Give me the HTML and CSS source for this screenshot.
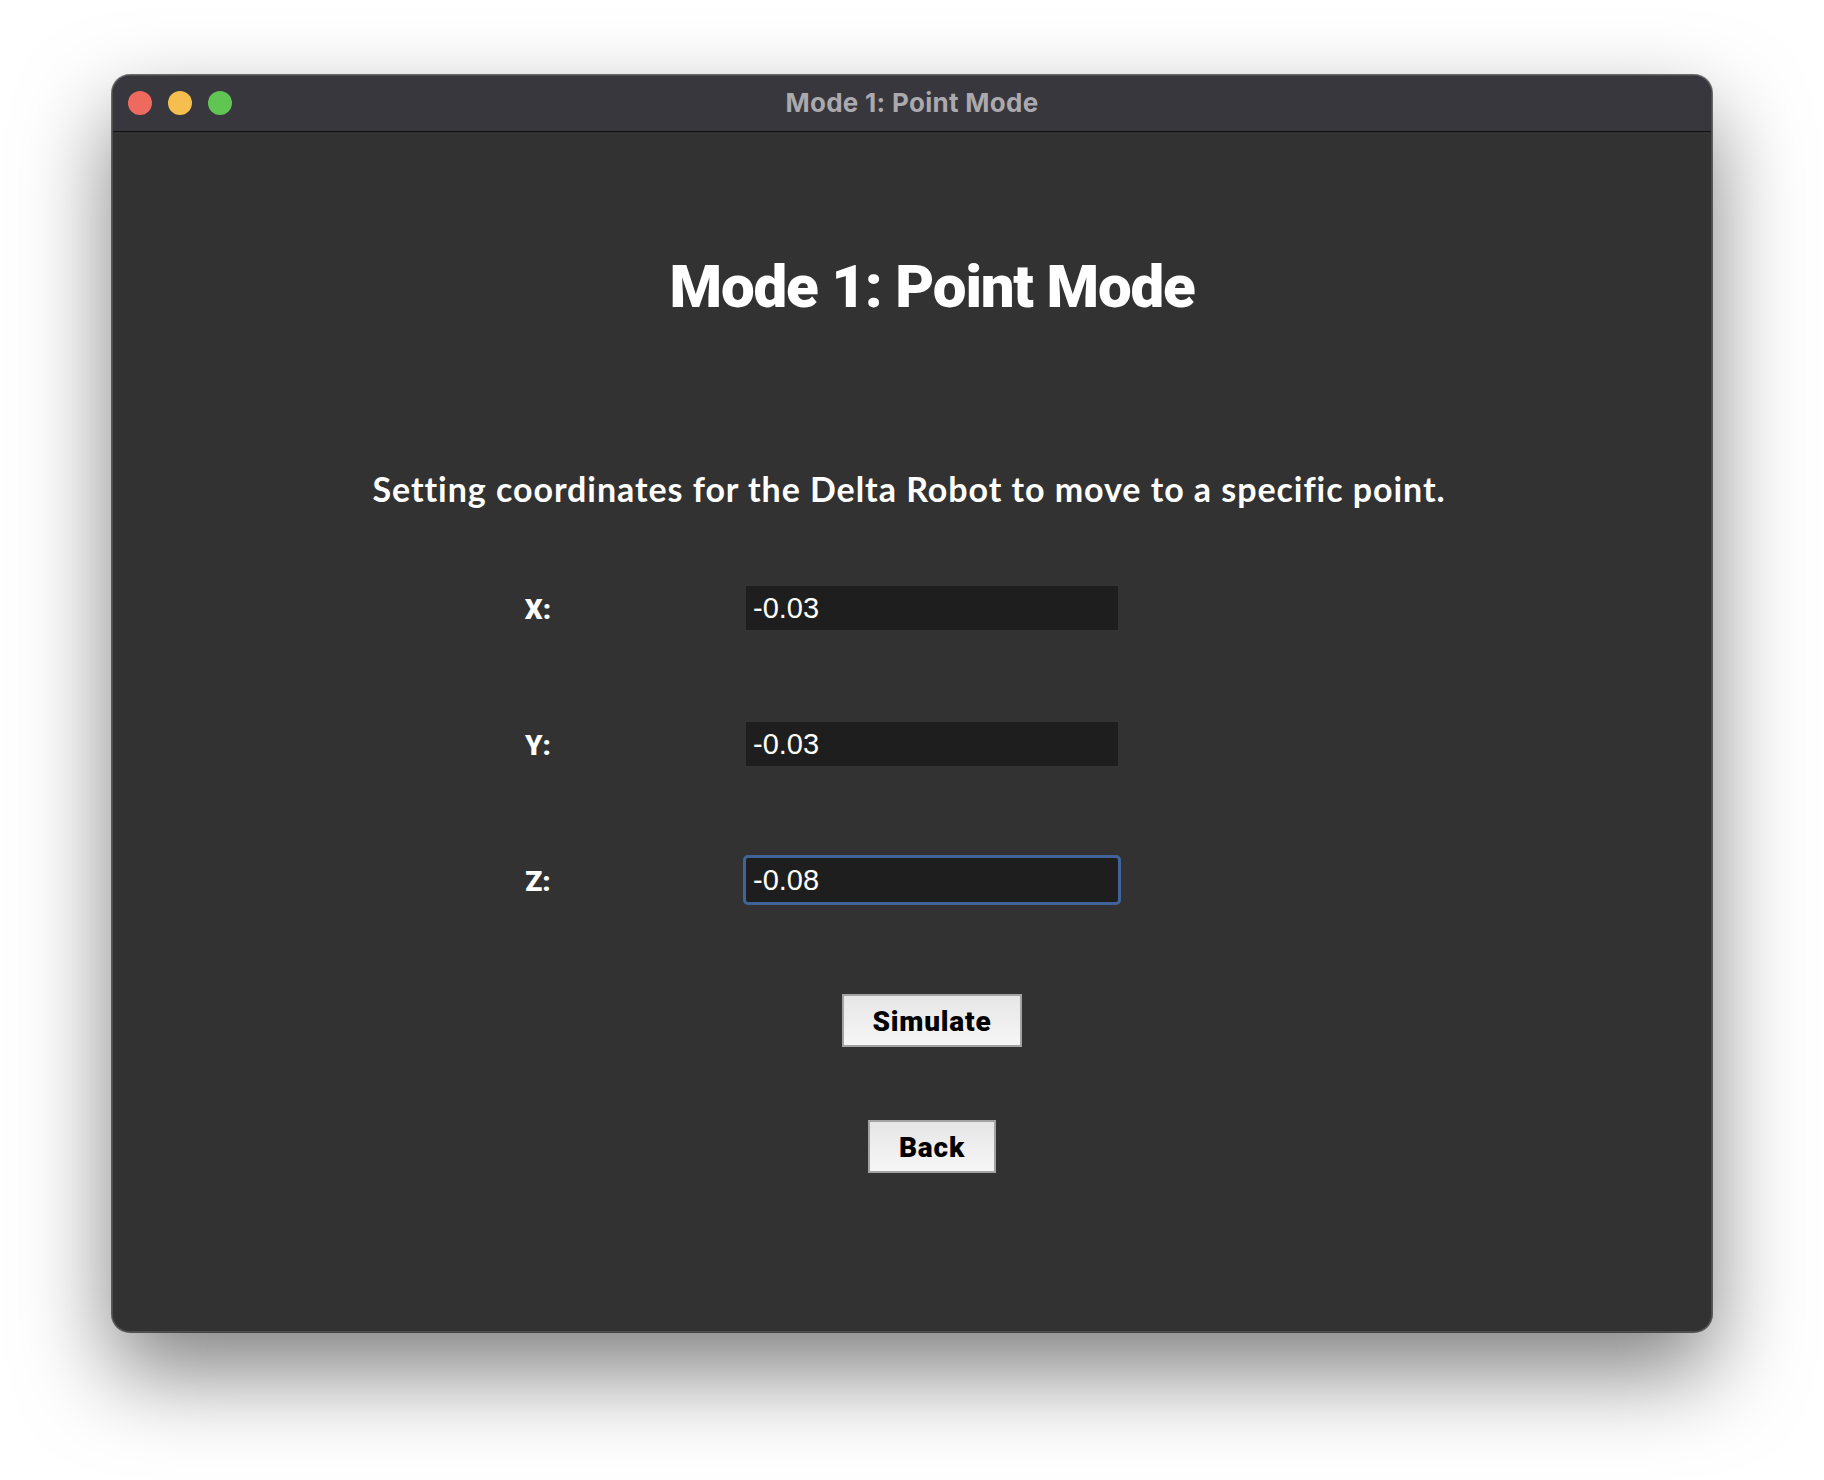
FILE: index.html
```
<!DOCTYPE html>
<html lang="en">
<head>
<meta charset="utf-8">
<title>Mode 1: Point Mode</title>
<link rel="stylesheet" href="styles.css">
</head>
<body>
<div class="window">
  <div class="titlebar">
    <div class="lights">
      <span class="light light-red"></span>
      <span class="light light-yellow"></span>
      <span class="light light-green"></span>
    </div>
    <div class="title">Mode 1: Point Mode</div>
  </div>
  <div class="content">
    <h1 class="heading">Mode 1: Point Mode</h1>
    <p class="subtitle">Setting coordinates for the Delta Robot to move to a specific point.</p>
    <div class="form">
      <label class="label">X:</label>
      <div class="entry">-0.03</div>
      <label class="label">Y:</label>
      <div class="entry">-0.03</div>
      <label class="label">Z:</label>
      <div class="entry entry-focus">-0.08</div>
    </div>
    <button class="btn btn-simulate">Simulate</button>
    <button class="btn btn-back">Back</button>
  </div>
</div>
</body>
</html>
```
FILE: styles.css
```
html, body {
  margin: 0;
  padding: 0;
  background: #ffffff;
}
body {
  padding: 75px 112px 0 112px;
  width: 1600px;
  height: 1405px;
  overflow: hidden;
}
.window {
  width: 1600px;
  height: 1257px;
  box-sizing: border-box;
  border: 1px solid #4e4e4e;
  border-radius: 18px;
  overflow: hidden;
  display: flex;
  flex-direction: column;
  background: #323232;
  box-shadow: 0 0 0 1px rgba(0,0,0,0.55), 0 40px 90px rgba(0,0,0,0.5);
}
.titlebar {
  height: 56px;
  box-sizing: border-box;
  border-bottom: 1px solid #111111;
  background: #38373d;
  display: grid;
  grid-template-columns: 1fr;
  align-items: center;
}
.lights {
  grid-area: 1 / 1;
  display: flex;
  gap: 16px;
  padding-left: 15px;
  align-self: center;
  margin-top: -2px;
}
.light {
  width: 24px;
  height: 24px;
  border-radius: 50%;
  display: block;
}
.light-red { background: #ee6a5f; }
.light-yellow { background: #f5be4f; }
.light-green { background: #61c554; }
.title {
  grid-area: 1 / 1;
  text-align: center;
  font-family: "Inter", "Liberation Sans", sans-serif;
  font-weight: 700;
  font-size: 26px;
  letter-spacing: 0.3px;
  color: #aaa9ae;
  margin-top: -2px;
}
.content {
  flex: 1;
  display: flex;
  flex-direction: column;
  align-items: center;
  padding-left: 40px;
  background: #323232;
}
.heading {
  margin: 125px 0 0 0;
  font-family: "Roboto", "Lato", sans-serif;
  font-weight: 900;
  font-size: 60px;
  line-height: 60px;
  letter-spacing: -1.2px;
  color: #ffffff;
}
.subtitle {
  margin: 155px 46px 0 0;
  font-family: "Lato", sans-serif;
  font-weight: 700;
  font-size: 34px;
  line-height: 34px;
  letter-spacing: 0.95px;
  color: #ffffff;
}
.form {
  margin-top: 80px;
  display: grid;
  grid-template-columns: 224px 96px 372px 320px;
  grid-auto-rows: 44px;
  row-gap: 92px;
}
.label {
  grid-column: 1;
  text-align: center;
  font-family: "Roboto", "Lato", sans-serif;
  font-weight: 900;
  font-size: 28px;
  line-height: 44px;
  padding-top: 2px;
  box-sizing: border-box;
  height: 44px;
  color: #ffffff;
}
.entry {
  grid-column: 3;
  height: 44px;
  box-sizing: border-box;
  padding-left: 7px;
  background: #1e1e1e;
  font-family: "Liberation Sans", "Helvetica", sans-serif;
  font-size: 29px;
  line-height: 44px;
  color: #ffffff;
}
.entry-focus {
  box-shadow: 0 0 0 3px #40639a;
  border-radius: 2px;
}
.btn {
  display: block;
  box-sizing: border-box;
  height: 53px;
  border: 2px solid #a3a3a3;
  border-radius: 0;
  background: linear-gradient(#e6e6e6, #f6f6f6);
  font-family: "Roboto", "Lato", sans-serif;
  font-weight: 900;
  font-size: 28px;
  letter-spacing: 0.8px;
  line-height: 46px;
  padding: 3px 0 0 0;
  color: #000000;
  text-align: center;
}
.btn-simulate {
  width: 180px;
  margin-top: 92px;
}
.btn-back {
  width: 128px;
  margin-top: 73px;
}
```
